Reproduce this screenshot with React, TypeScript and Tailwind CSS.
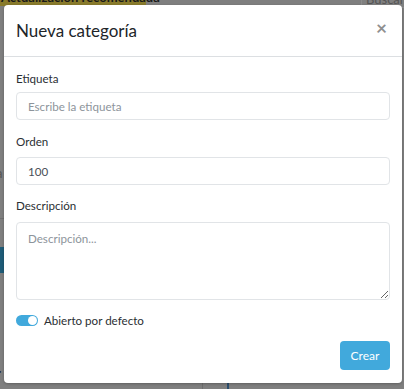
import React from 'react';

export default function App(): JSX.Element {
  return (
    <div className="relative w-[404px] h-[389px] overflow-hidden bg-[#7f7f7f] font-['Lato','Open_Sans',sans-serif] text-[#212529]">
      {/* page behind the overlay */}
      <div className="absolute left-0 top-[-12px] h-[18px] w-[146px] bg-[#897b2c] pl-[1px] text-[13px] font-bold leading-[18px] text-[#1a1a1a] whitespace-nowrap">
        Actualización recomendada
      </div>
      <div className="absolute left-[361px] top-[-12px] h-[20px] w-[60px] border border-[#8c8c8c] bg-[#808080] pl-[4px] text-[13px] leading-[20px] text-[#555]">
        Buscar
      </div>
      <div className="absolute left-0 top-[247px] h-[26px] w-[6px] bg-[#1f5c78]" />
      <div className="absolute left-0 top-[218px] h-px w-[4px] bg-[#707070]" />
      <div className="absolute left-[-4px] top-[364px] text-[13px] font-bold text-[#1a1a1a]">r</div>
      <div className="absolute left-[-4px] top-[164px] text-[13px] text-[#555]">a</div>
      <div className="absolute left-[202px] top-[383px] h-[6px] w-px bg-[#6e6e6e]" />
      <div className="absolute left-[227px] top-[383px] h-[6px] w-[2px] bg-[#2d4f6e]" />

      {/* modal */}
      <div className="absolute left-[4px] top-[5px] w-[398px] h-[378px] rounded-[4px] bg-white shadow-[0_1px_3px_rgba(0,0,0,0.25)] flex flex-col">
        <div className="h-[52px] px-3 flex items-center justify-between border-b border-[#dcdfe2]">
          <h5 className="text-[17px] leading-[24px] text-[#212529]">Nueva categoría</h5>
          <button className="mr-[3px] mb-[7px] text-[19px] font-bold leading-none text-[#8f8f8f]">×</button>
        </div>

        <div className="px-3 pt-[12px] flex flex-col">
          <label className="text-[11.6px] leading-[19px] mb-[4px] text-[#2b2f33]">Etiqueta</label>
          <input
            placeholder="Escribe la etiqueta"
            className="h-[28px] w-full rounded-[4px] border border-[#e1e4e7] px-[11px] text-[11.6px] placeholder:text-[#8d949b] outline-none"
          />

          <label className="text-[11.6px] leading-[19px] mt-[12px] mb-[6px] text-[#2b2f33]">Orden</label>
          <input
            defaultValue="100"
            className="h-[28px] w-full rounded-[4px] border border-[#e1e4e7] px-[11px] text-[11.6px] text-[#495057] outline-none"
          />

          <label className="text-[11.6px] leading-[19px] mt-[11px] mb-[7px] text-[#2b2f33]">Descripción</label>
          <textarea
            placeholder="Descripción..."
            className="h-[78px] w-full rounded-[4px] border border-[#e1e4e7] px-[11px] py-[6px] text-[11.6px] leading-[19px] placeholder:text-[#8d949b] outline-none"
          />

          <div className="mt-[10px] h-[20px] flex items-center gap-[6px]">
            <div className="relative h-[11px] w-[22px] rounded-full bg-[#41a9dc]">
              <div className="absolute right-[1px] top-[1px] h-[9px] w-[9px] rounded-full bg-white" />
            </div>
            <span className="text-[11.6px] leading-[19px] text-[#2b2f33]">Abierto por defecto</span>
          </div>

          <div className="mt-[11px] flex justify-end">
            <button className="h-[29px] w-[50px] rounded-[4px] bg-[#41a9dc] text-[12px] text-white">Crear</button>
          </div>
        </div>
      </div>
    </div>
  );
}
